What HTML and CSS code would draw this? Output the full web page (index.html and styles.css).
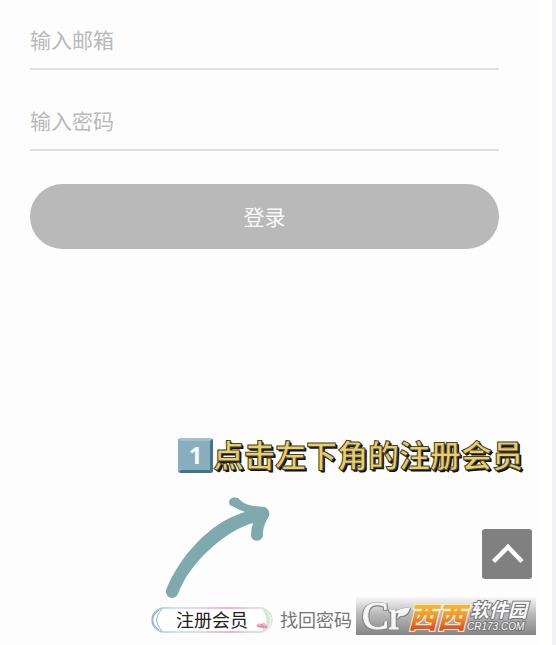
FILE: index.html
```html
<!DOCTYPE html>
<html lang="zh-CN">
<head>
<meta charset="utf-8">
<meta name="viewport" content="width=device-width, initial-scale=1">
<title>登录</title>
<link rel="stylesheet" href="styles.css">
</head>
<body>
<main class="page">
  <form class="login">
    <input class="field" type="email" placeholder="输入邮箱" aria-label="输入邮箱">
    <input class="field" type="password" placeholder="输入密码" aria-label="输入密码">
    <button class="submit" type="button">登录</button>
  </form>
  <section class="guide">
    <h1 class="tip">
      <span class="step">1</span>
      <span class="tip-text">点击左下角的注册会员</span>
    </h1>
    <svg class="arrow" width="112" height="104" viewBox="0 0 112 104" aria-hidden="true">
      <path d="M4 93C16 62 47 25 83 15Q73 11 68 8C65 3 70 -1 76 1C83 9 91 9 103 10Q110 14 106 21C101 29 101 34 101 39C99 46 89 45 89 38Q89 32 91 26C63 34 27 66 16 97C12 104 3 101 4 93Z" fill="#7ea9ad"/>
    </svg>
  </section>
  <nav class="links">
    <a class="register" href="#register">
      <svg class="frame" width="124" height="28" viewBox="0 0 124 28" aria-hidden="true">
        <defs>
          <linearGradient id="rim" x1="0" x2="1" y1="0" y2="0">
            <stop offset="0" stop-color="#91b5da"/>
            <stop offset=".2" stop-color="#b4e3e8"/>
            <stop offset=".4" stop-color="#dccbe6"/>
            <stop offset=".65" stop-color="#df9ccf"/>
            <stop offset=".85" stop-color="#d0d5e4"/>
            <stop offset="1" stop-color="#d5e8d4"/>
          </linearGradient>
        </defs>
        <path d="M12 2H112Q122 6 122 14Q122 22 112 26H12Q2 22 2 14Q2 6 12 2Z" fill="#fff" stroke="url(#rim)" stroke-width="1.500"/>
        <path d="M9 4Q-4 14 9 24M12 3Q1 14 12 25" fill="none" stroke="#8fb2d8" stroke-width="1"/>
        <path d="M113 3Q126 14 113 25Q122 14 113 3Z" fill="#d5e8d4" stroke="#d5e8d4" stroke-width="2"/>
        <path d="M106 20Q108 16 111 18Q115 15 116 19Q120 19 117 22Q112 24 106 20Z" fill="#edb6d2"/>
        <path d="M107 20L117 21M111 18L114 22" stroke="#cf7eac" stroke-width="1"/>
      </svg>
      <span class="register-text">注册会员</span>
    </a>
    <a class="forgot" href="#forgot">找回密码</a>
  </nav>
</main>
<button class="to-top" type="button" aria-label="返回顶部">
  <svg width="50" height="50" viewBox="0 0 50 50" aria-hidden="true"><path d="M11.500 32.500L26 18L40 32.500" fill="none" stroke="#fff" stroke-width="4.500"/></svg>
</button>
<svg class="watermark" width="180" height="38" viewBox="0 0 180 38" role="img" aria-label="西西软件园 CR173.COM">
  <defs>
    <linearGradient id="plate" x1="0" x2="0" y1="0" y2="1">
      <stop offset="0" stop-color="#f8f8f8"/><stop offset=".45" stop-color="#b9b9b9"/><stop offset="1" stop-color="#858585"/>
    </linearGradient>
    <linearGradient id="flame" gradientUnits="userSpaceOnUse" x1="0" x2="0" y1="7" y2="33">
      <stop offset="0" stop-color="#f3bd35"/><stop offset=".5" stop-color="#ee942c"/><stop offset="1" stop-color="#df4a20"/>
    </linearGradient>
  </defs>
  <path d="M0 0H180V38H0Z" fill="url(#plate)"/>
  <g class="mark">
    <text class="mark-cr" x="6" y="32">Cr</text>
    <path d="M42 18Q44 9 54 11Q51 20 44 19L41 22Z" fill="#f5f5f5"/>
  </g>
  <text class="mark-xi" x="52" y="31" fill="url(#flame)">西西</text>
  <text class="mark-name" x="114" y="20">软件园</text>
  <text class="mark-site" x="111" y="33">CR173.COM</text>
</svg>
</body>
</html>
```
FILE: styles.css
```css
* {
  box-sizing: border-box;
}

body {
  margin: 0;
  min-height: 100vh;
  padding-right: 12px;
  border-right: 4px solid #eff1f4;
  background: #fff;
  font-family: "Noto Sans CJK SC", sans-serif;
}

.page {
  min-height: 100vh;
  padding: 12px 41px 0 30px;
  background: #fdfdfd;
}

.login {
  display: flex;
  flex-direction: column;
}

.field {
  height: 58px;
  margin: 0 0 23px;
  padding: 0 0 2px;
  border: 0;
  border-bottom: 2px solid #e0e0e0;
  border-radius: 0;
  outline: 0;
  background: transparent;
  color: #333;
  font: 21px "Noto Sans CJK SC", sans-serif;
}

.field::placeholder {
  color: #b9b9b9;
  opacity: 1;
}

.submit {
  height: 65px;
  margin-top: 10px;
  padding: 0 0 2px;
  border: 0;
  border-radius: 33px;
  background: #b9b9b9;
  color: #fafafa;
  font: 21px "Noto Sans CJK SC", sans-serif;
}

.guide {
  margin-top: 188px;
  padding-left: 132px;
}

.tip {
  display: flex;
  align-items: center;
  height: 36px;
  margin: 0 0 24px 16px;
  font-size: 31px;
  line-height: 34px;
  white-space: nowrap;
}

.step {
  flex: none;
  width: 35px;
  height: 35px;
  border: 3px solid;
  border-color: #9fc2d1 #427588 #427588 #87b0c2;
  border-radius: 3px;
  background: #87adbf;
  color: #f5fafc;
  font: bold 24px/28px "Noto Sans", sans-serif;
  text-align: center;
}

.tip-text {
  height: 36px;
  color: #e8cf6b;
  font-weight: 700;
  -webkit-text-stroke: 1px #4a4228;
  text-shadow: 1px 1px 0 #111, 2px 2px 0 #111;
}

.arrow {
  display: block;
  overflow: visible;
}

.links {
  display: flex;
  align-items: center;
  gap: 6px;
  height: 28px;
  margin: 5px 0 0 120px;
  font-size: 18px;
  line-height: 26px;
  white-space: nowrap;
}

.register {
  display: grid;
  flex: none;
  color: #222;
  text-decoration: none;
}

.frame,
.register-text {
  grid-area: 1 / 1;
}

.register-text {
  padding-left: 26px;
}

.forgot {
  height: 28px;
  color: #777;
  text-decoration: none;
}

.to-top {
  position: absolute;
  top: 529px;
  right: 24px;
  width: 50px;
  height: 50px;
  padding: 0;
  border: 0;
  border-radius: 3px;
  background: #808080;
}

.to-top svg {
  display: block;
}

.watermark {
  position: absolute;
  top: 597px;
  right: 20px;
  overflow: visible;
}

.mark {
  filter: drop-shadow(1px 0 0 #888) drop-shadow(-1px 0 0 #888) drop-shadow(0 1px 0 #888);
}

.mark-cr {
  fill: #f5f5f5;
  stroke: #f5f5f5;
  stroke-width: 1px;
  font: 40px "Liberation Serif", serif;
}

.mark-xi {
  stroke: #fff3dc;
  stroke-width: 2px;
  paint-order: stroke;
  font: italic 900 29px "Noto Sans CJK SC", sans-serif;
}

.mark-name,
.mark-site {
  fill: #fafafa;
  stroke: #777;
  stroke-width: 2px;
  paint-order: stroke;
}

.mark-name {
  font: italic 700 19px "Noto Sans CJK SC", sans-serif;
}

.mark-site {
  font: italic 10px "Liberation Sans", sans-serif;
}
```
